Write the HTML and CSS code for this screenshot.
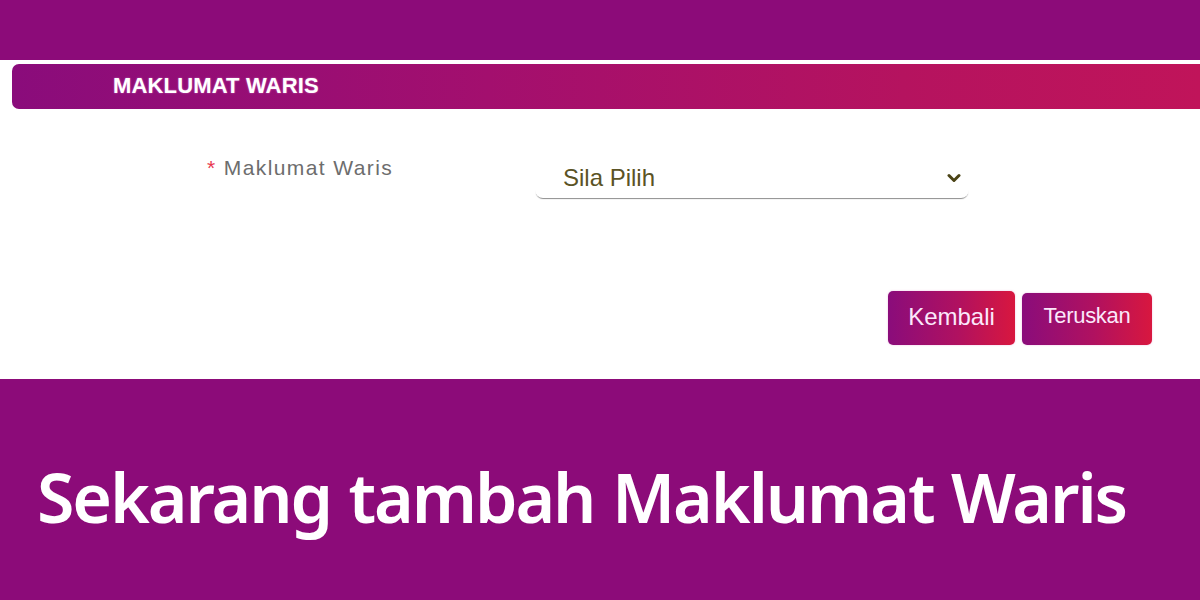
FILE: index.html
```html
<!DOCTYPE html>
<html>
<head>
<meta charset="utf-8">
<link rel="stylesheet" href="styles.css">
</head>
<body>
<div class="topband"></div>
<div class="panel">
  <div class="section-head">MAKLUMAT WARIS</div>
  <div class="form-row">
    <div class="label"><span class="req">*</span> Maklumat Waris</div>
    <div class="select">
      <span class="select-text">Sila Pilih</span>
      <svg class="chev" width="14" height="10" viewBox="0 0 14 10"><path d="M2 2.5 L7 7.5 L12 2.5" fill="none" stroke="#4b4416" stroke-width="3" stroke-linecap="round" stroke-linejoin="round"/></svg>
    </div>
  </div>
  <div class="actions">
    <button class="btn btn-back">Kembali</button>
    <button class="btn btn-next">Teruskan</button>
  </div>
</div>
<div class="caption">
  <h1>Sekarang tambah Maklumat Waris</h1>
</div>
</body>
</html>
```
FILE: styles.css
```css
* { box-sizing: border-box; }
html, body { margin: 0; padding: 0; }
body {
  width: 1200px;
  height: 600px;
  overflow: hidden;
  background: #ffffff;
  font-family: "Liberation Sans", Arial, sans-serif;
}
.topband {
  height: 60px;
  background: #8c0b79;
}
.panel {
  height: 319px;
  padding-top: 4px;
  background: #ffffff;
}
.section-head {
  margin-left: 12px;
  height: 45px;
  border-radius: 7px 0 0 7px;
  background: linear-gradient(90deg, #8a0c7b 0%, #a30f6e 40%, #b5135f 75%, #c0145a 100%);
  color: #ffffff;
  font-weight: bold;
  font-size: 22px;
  letter-spacing: 0.15px;
  padding-left: 101px;
  padding-bottom: 1px;
  display: flex;
  align-items: center;
  text-shadow: 0 0 2px rgba(255,200,255,0.5);
}
.form-row {
  display: flex;
  align-items: flex-start;
  margin-top: 46px;
}
.label {
  margin-left: 207px;
  width: 328px;
  font-size: 21px;
  letter-spacing: 1.4px;
  color: #6d6d6d;
  padding-top: 1px;
}
.req { color: #e8384f; }
.select {
  width: 434px;
  height: 38px;
  margin-top: 5px;
  display: flex;
  align-items: center;
  justify-content: space-between;
  padding: 0 8px 2px 28px;
  border-radius: 0 0 8px 8px;
  box-shadow: 0 2px 1px -1px rgba(0,0,0,0.45);
  background: #fff;
}
.select-text {
  font-size: 24px;
  color: #5b5325;
}
.chev { display: block; }
.actions {
  display: flex;
  justify-content: flex-end;
  gap: 7px;
  margin-top: 93px;
  padding-right: 48px;
}
.btn {
  border: none;
  border-radius: 5px;
  background: linear-gradient(90deg, #8a0c7b 0%, #b01160 55%, #d8173f 100%);
  color: #fbe8fb;
  font-family: "Liberation Sans", Arial, sans-serif;
  height: 54px;
  padding: 0;
  box-shadow: 0 0 2px rgba(220,120,200,0.5);
}
.btn-back { width: 127px; font-size: 24px; padding-bottom: 2px; }
.btn-next { width: 130px; height: 52px; margin-top: 2px; font-size: 22px; letter-spacing: -0.3px; padding-bottom: 6px; }
.caption {
  height: 221px;
  background: #8c0b79;
  padding-left: 37px;
  padding-top: 84px;
}
.caption h1 {
  margin: 0;
  color: #ffffff;
  font-family: "Noto Sans", "Open Sans", sans-serif;
  font-weight: 600;
  font-size: 68px;
  line-height: 1;
  letter-spacing: -2.1px;
  word-spacing: 2px;
}
```
